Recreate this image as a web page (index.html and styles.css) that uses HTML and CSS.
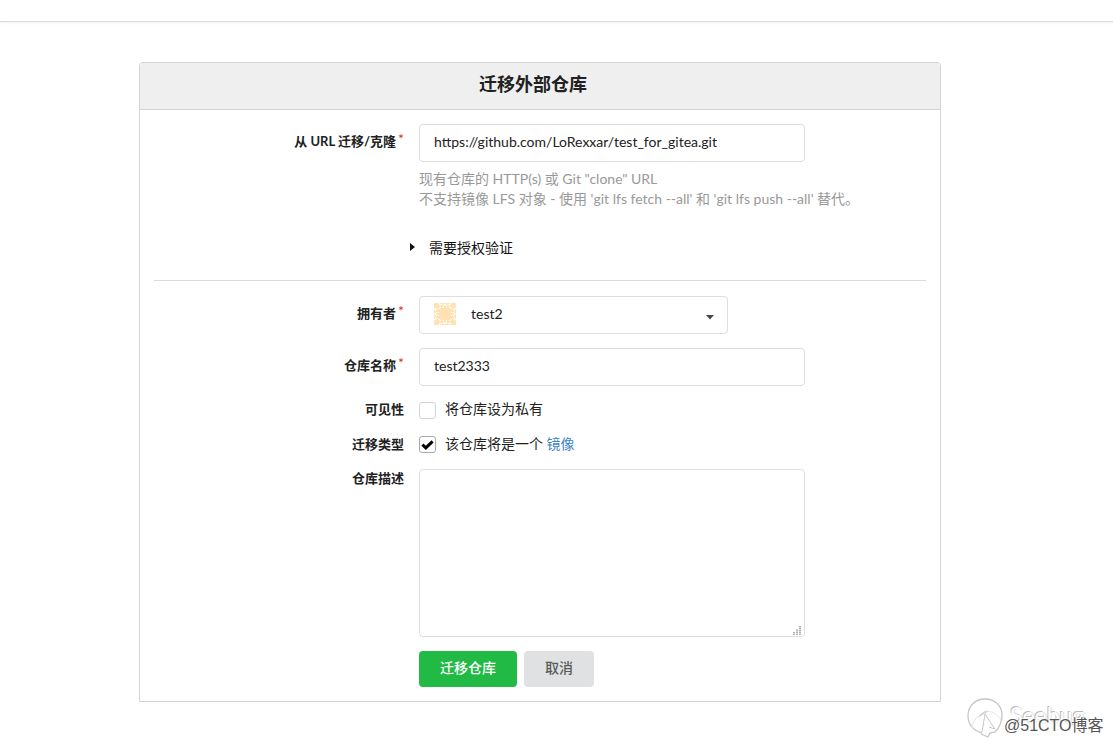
FILE: index.html
```html
<!DOCTYPE html>
<html lang="zh-CN">
<head>
    <meta charset="UTF-8">
    <meta name="viewport" content="width=device-width, initial-scale=1.0">
    <title>迁移外部仓库</title>
    <link rel="stylesheet" href="styles.css">
</head>
<body>
    <div class="navbar"></div>

    <form class="panel">
        <h3 class="header">迁移外部仓库</h3>
        <div class="segment">
            <div class="field url">
                <label class="required" for="clone_addr">从 URL 迁移/克隆</label>
                <div>
                    <input class="text-input" id="clone_addr" type="text" value="https://github.com/LoRexxar/test_for_gitea.git" spellcheck="false">
                    <div class="help">现有仓库的 HTTP(s) 或 Git "clone" URL<br>不支持镜像 LFS 对象 - 使用 'git lfs fetch --all' 和 'git lfs push --all' 替代。</div>
                </div>
            </div>
            <div class="accordion">
                <svg width="5" height="8" viewBox="0 0 5 8"><path d="M0 0L5 4L0 8Z" fill="#111"/></svg>
                <span>需要授权验证</span>
            </div>

            <div class="divider"></div>

            <div class="field">
                <label class="required">拥有者</label>
                <div class="dropdown">
                    <svg class="avatar" width="22" height="22" viewBox="0 0 22 22">
                        <rect width="22" height="22" rx="1" fill="#ffe1b3"/>
                        <g fill="none" stroke="#fff" stroke-width="1.1">
                            <path d="M5 0l1 2 2-1M9 3l2-2 2 2M14 1l2 1 1-2"/>
                            <path d="M5 22l1-2 2 1M9 19l2 2 2-2M14 21l2-1 1 2"/>
                            <path d="M0 5l2 1-1 2M3 9l-2 2 2 2M1 14l1 2-2 1"/>
                            <path d="M22 5l-2 1 1 2M19 9l2 2-2 2M21 14l-1 2 2 1"/>
                            <path d="M4 6l3-2M15 4l3 2M4 16l3 2M15 18l3-2M9 4.5h1M12 4.5h1M9 17.5h1M12 17.5h1M4.5 9v1M4.5 12v1M17.5 9v1M17.5 12v1"/>
                        </g>
                    </svg>
                    <span>test2</span>
                    <svg class="caret" width="8" height="5" viewBox="0 0 8 5"><path d="M0 0H8L4 4.5Z" fill="#484848"/></svg>
                </div>
            </div>
            <div class="field">
                <label class="required" for="repo_name">仓库名称</label>
                <input class="text-input" id="repo_name" type="text" value="test2333" spellcheck="false">
            </div>
            <div class="field check">
                <label>可见性</label>
                <div class="checkbox">
                    <span class="box"></span>
                    <span>将仓库设为私有</span>
                </div>
            </div>
            <div class="field check">
                <label>迁移类型</label>
                <div class="checkbox">
                    <span class="box checked">
                        <svg width="13" height="10" viewBox="0 0 13 10"><path d="M1.4 4.7L4.8 7.9L11.6 1.3" fill="none" stroke="#000" stroke-width="3"/></svg>
                    </span>
                    <span>该仓库将是一个 <a href="#">镜像</a></span>
                </div>
            </div>
            <div class="field description">
                <label for="description">仓库描述</label>
                <div class="textarea-wrap">
                    <textarea id="description"></textarea>
                    <svg class="grip" width="8" height="9" viewBox="0 0 8 9" shape-rendering="crispEdges">
                        <path d="M0 6h2v3H0zM3 3h2v6H3zM6 0h2v9H6z" fill="#dadada"/>
                        <path d="M0 6h2v1H0zM0 8h2v1H0zM3 4h2v1H3zM3 6h2v1H3zM3 8h2v1H3zM6 0h2v1H6zM6 2h2v1H6zM6 4h2v1H6zM6 6h2v1H6zM6 8h2v1H6z" fill="#b4b4b4"/>
                    </svg>
                </div>
            </div>
            <div class="field buttons">
                <label></label>
                <button class="button green" type="button">迁移仓库</button>
                <button class="button" type="button">取消</button>
            </div>
        </div>
    </form>

    <div class="watermark">
        <svg width="36" height="40" viewBox="0 0 36 40" fill="none" stroke="#c6c6c6" stroke-width="1.3">
            <path d="M15 35C7 33 1 27 1 18C1 8 8 1 18 1S35 8 35 17C35 25 32 30 28 34L23 35L21 39L14 36"/>
            <path d="M11 19L21 13M13 17L19 13M18 16L15 34M18 16L28 31L22 29" stroke-width="1"/>
            <path d="M20 13C27 14 32 17 34 23M10 19C7 23 5 26 5 30" stroke="#e6e6e6" stroke-width="1"/>
        </svg>
        <span class="seebug">Seebug</span>
        <span class="blog">@51CTO博客</span>
    </div>
</body>
</html>
```
FILE: styles.css
```css
* {
    box-sizing: border-box;
}
body {
    margin: 0;
    height: 744px;
    overflow: hidden;
    background-color: #fff;
    color: #212121;
    font-family: Lato, "Noto Sans CJK SC", sans-serif;
    font-size: 14px;
    line-height: 20px;
}
.navbar {
    height: 22px;
    border-bottom: 1px solid #dbdbdb;
    box-shadow: 0 1px 3px rgba(0, 0, 0, .06);
}
.panel {
    width: 802px;
    height: 640px;
    margin: 40px 0 0 139px;
    border: 1px solid #d4d4d5;
    border-radius: 4px 4px 0 0;
}
.header {
    height: 47px;
    margin: 0;
    background-color: #efefef;
    border-bottom: 1px solid #d4d4d5;
    border-radius: 3px 3px 0 0;
    font-size: 18px;
    line-height: 43px;
    text-align: center;
    padding-right: 14px;
}
.segment {
    padding: 14px;
}
.field {
    display: flex;
    align-items: flex-start;
    margin-bottom: 14px;
}
.field > label {
    width: 250px;
    margin-right: 15px;
    padding-top: 7px;
    flex: none;
    text-align: right;
    font-size: 13px;
    font-weight: bold;
}
.required::after {
    content: "*";
    margin-left: 2px;
    color: #db2828;
    font-size: 14px;
    font-weight: normal;
    vertical-align: 2px;
    line-height: 1;
}
.text-input {
    display: block;
    width: 386px;
    height: 38px;
    padding: 0 14px 3px;
    border: 1px solid #dededf;
    border-radius: 4px;
    color: #212121;
    font: inherit;
    outline: none;
}
.field.url {
    margin-bottom: 0;
}
.help {
    margin-top: 7px;
    color: #999;
    white-space: nowrap;
}
.accordion {
    display: flex;
    align-items: center;
    gap: 14px;
    height: 20px;
    margin: 29px 0 22px 256px;
    color: #111;
}
.accordion svg {
    margin-bottom: 2px;
}
.divider {
    height: 1px;
    margin-bottom: 15px;
    background-color: #dbdbdc;
}
.dropdown {
    display: flex;
    align-items: center;
    width: 309px;
    height: 38px;
    padding: 0 13px 2px 14px;
    border: 1px solid #dededf;
    border-radius: 4px;
}
.avatar {
    margin-right: 15px;
}
.caret {
    margin: 7px 0 0 auto;
}
.field.check {
    height: 20px;
    margin-top: -1px;
    margin-bottom: 15px;
}
.field.check > label {
    padding-top: 0;
}
.checkbox {
    display: flex;
    height: 20px;
}
.box {
    display: flex;
    align-items: center;
    justify-content: center;
    width: 17px;
    height: 17px;
    margin: 3px 9px 0 0;
    border: 1px solid #d4d4d5;
    border-radius: 3px;
}
.box.checked {
    margin-top: 2px;
    border-color: #aaa;
}
a {
    color: #4183c4;
    text-decoration: none;
}
.field.check + .field.check {
    margin-top: 15px;
    margin-bottom: 14px;
}
.field.description {
    margin-top: 15px;
}
.field.description > label {
    padding-top: 0;
    margin-top: -1px;
}
.textarea-wrap {
    position: relative;
}
textarea {
    display: block;
    width: 386px;
    height: 168px;
    border: 1px solid #dededf;
    border-radius: 4px;
    outline: none;
    resize: none;
}
.grip {
    position: absolute;
    right: 4px;
    bottom: 2px;
}
.button {
    height: 36px;
    width: 70px;
    margin-right: 7px;
    padding: 0 0 2px;
    border: none;
    border-radius: 4px;
    background-color: #e0e1e2;
    color: #5a5a5a;
    font: inherit;
    font-weight: 500;
}
.button.green {
    width: 98px;
    background-color: #21ba45;
    color: #fff;
}
.watermark {
    position: absolute;
    left: 967px;
    top: 698px;
    width: 146px;
    height: 42px;
    font-family: "Liberation Sans", "Noto Sans CJK SC", sans-serif;
}
.seebug {
    position: absolute;
    left: 43px;
    top: 7px;
    color: #fff;
    font-family: Lato, sans-serif;
    font-size: 23px;
    text-shadow: -1px -1px 0 #bbb, 1px 0 0 #ddd;
}
.blog {
    position: absolute;
    left: 37px;
    top: 18px;
    color: #555;
    font-size: 16px;
    text-shadow: 1px 1px 0 #fff, -1px -1px 0 rgba(255, 255, 255, .6);
    white-space: nowrap;
}
```
